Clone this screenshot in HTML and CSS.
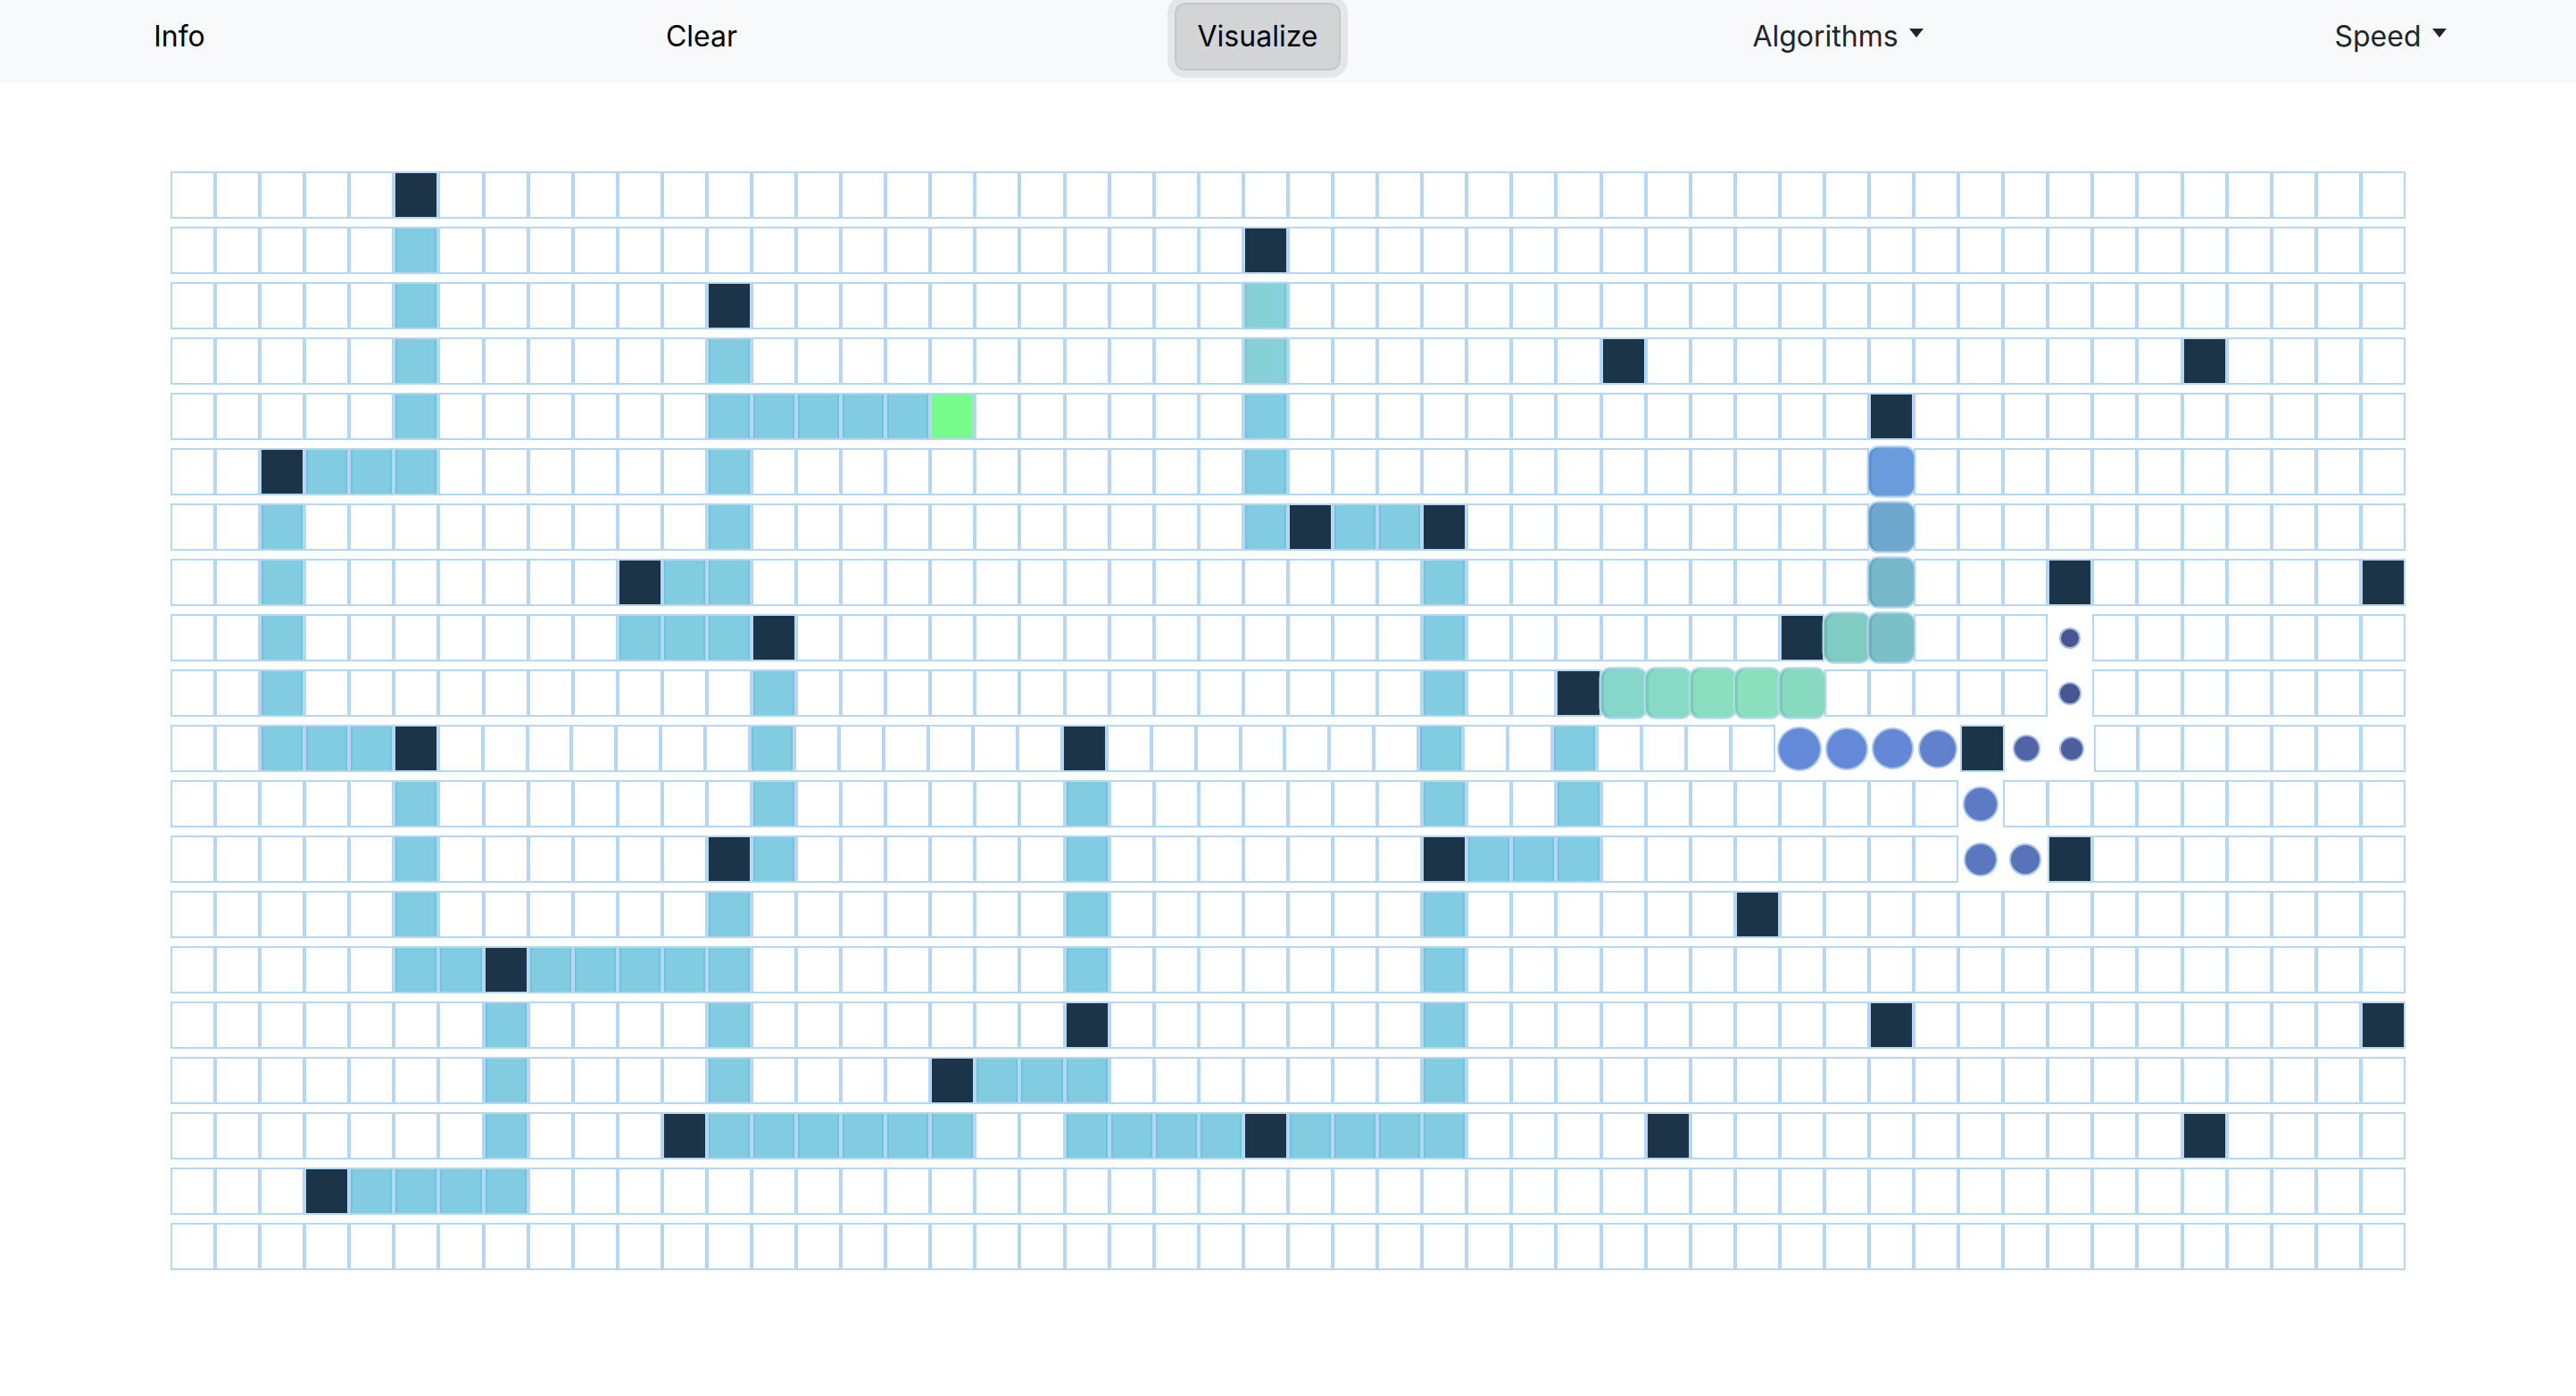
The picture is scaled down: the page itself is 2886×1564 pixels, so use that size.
FILE: index.html
```html
<!DOCTYPE html>
<html lang="en">
<head>
<meta charset="utf-8">
<title>Pathfinding Visualizer</title>
<link rel="stylesheet" href="styles.css">
</head>
<body>
<nav class="navbar">
  <a class="nav-link">Info</a>
  <a class="nav-link">Clear</a>
  <div class="nav-item"><button class="btn-visualize">Visualize</button></div>
  <a class="nav-link dropdown">Algorithms</a>
  <a class="nav-link dropdown">Speed</a>
</nav>
<main class="board" id="board"></main>
<script src="script.js"></script>
</body>
</html>
```

FILE: styles.css
```css
* { box-sizing: border-box; }

body {
  margin: 0;
  background: #ffffff;
  font-family: Inter, "Noto Sans", "Liberation Sans", sans-serif;
}

.navbar {
  display: grid;
  grid-template-columns: 402px 768px 478px 822px 416px;
  justify-items: center;
  align-items: start;
  height: 93px;
  padding-top: 3px;
  background: #f8f9fa;
}

.nav-link {
  padding-top: 14px;
  font-size: 32px;
  line-height: 48px;
  color: #000000;
  cursor: pointer;
}

.nav-link.dropdown { color: #212529; }

.nav-link.dropdown::after {
  content: "";
  display: inline-block;
  margin-left: 12px;
  vertical-align: 10px;
  border-top: 10px solid currentColor;
  border-left: 8px solid transparent;
  border-right: 8px solid transparent;
}

.btn-visualize {
  font: inherit;
  font-size: 32px;
  line-height: 48px;
  padding: 12px 24px;
  border: 2px solid #c6c7c8;
  border-radius: 12px;
  background: #d3d4d5;
  color: #000000;
  box-shadow: 0 0 0 8px rgba(211, 212, 213, 0.5);
}

.board {
  width: 2504px;
  margin: 99px auto 0;
  display: flex;
  flex-direction: column;
  gap: 9px;
}

.row {
  display: flex;
  height: 53px;
}

.cell {
  flex: 1 1 0;
  border: 2px solid #b6d7f3;
  background: #ffffff;
  display: flex;
  align-items: center;
  justify-content: center;
}

.cell.wall { background: #1b3447; }

.cell.visited {
  background: #82cce1;
  box-shadow: inset 2px 0 0 #6fc3de, inset -2px 0 0 #6fc3de;
}

.cell.visited-teal {
  background: #86d1d8;
  border-color: #aed3ef;
  box-shadow: inset 2px 0 0 #73c6d4, inset -2px 0 0 #73c6d4, 0 0 2px #c9e2f6;
}

.cell.start { background: #79fc8e; }

.cell.path {
  position: relative;
  transform: scale(1.1);
  border-radius: 12px;
  border-color: rgba(182, 215, 243, 0.9);
  box-shadow: inset 3px 0 0 rgba(0, 80, 90, 0.12);
}

.cell.orb-cell {
  border-color: transparent;
  background: transparent;
}

.orb {
  display: block;
  border-radius: 50%;
  border: 2px solid rgba(182, 215, 243, 0.8);
}
```

FILE: script.js
```js
const ROWS = 20;
const COLS = 50;

const walls = [
  [0,5],[1,24],[2,12],[3,32],[3,45],[4,38],[5,2],[6,25],[6,28],[7,10],[7,42],[7,49],
  [8,13],[8,36],[9,31],[10,5],[10,20],[10,40],[12,12],[12,28],[12,42],[13,35],[14,7],
  [15,20],[15,38],[15,49],[16,17],[17,11],[17,24],[17,33],[17,45],[18,3]
];

const visited = {
  1: ["5"],
  2: ["5"],
  3: ["5", "12"],
  4: ["5", "12-16", "24"],
  5: ["3-5", "12", "24"],
  6: ["2", "12", "24", "26-27"],
  7: ["2", "11-12", "28"],
  8: ["2", "10-12", "28"],
  9: ["2", "13", "28"],
  10: ["2-4", "13", "28", "31"],
  11: ["5", "13", "20", "28", "31"],
  12: ["5", "13", "20", "29-31"],
  13: ["5", "12", "20", "28"],
  14: ["5-6", "8-12", "20", "28"],
  15: ["7", "12", "28"],
  16: ["7", "12", "18-20", "28"],
  17: ["7", "12-17", "20-23", "25-28"],
  18: ["4-7"]
};

const teal = [[2,24],[3,24]];
const start = [4,17];

const path = [
  [5,38,"#6a9bdc"],[6,38,"#6fa7cf"],[7,38,"#77b7ca"],[8,38,"#7bbfc8"],[8,37,"#80cbc2"],
  [9,36,"#88dabe"],[9,35,"#8ae0bc"],[9,34,"#89dec0"],[9,33,"#87dbc5"],[9,32,"#86d6ca"]
];

const orbs = [
  [10,36,50,"#6589d9"],[10,37,48,"#6489d8"],[10,38,47,"#6387d4"],[10,39,44,"#6181cd"],
  [11,40,40,"#5c7bc4"],[12,40,38,"#5a77bf"],[12,41,36,"#5873b8"],
  [10,41,31,"#5264a5"],[10,42,28,"#4f5f9e"],[9,42,26,"#4a5692"],[8,42,24,"#4a5590"]
];

const types = {};
const key = (r, c) => r + "," + c;

walls.forEach(([r, c]) => { types[key(r, c)] = { cls: "wall" }; });
Object.keys(visited).forEach((r) => {
  visited[r].forEach((spec) => {
    const [a, b] = spec.split("-").map(Number);
    const end = b === undefined ? a : b;
    for (let c = a; c <= end; c++) types[key(r, c)] = { cls: "visited" };
  });
});
teal.forEach(([r, c]) => { types[key(r, c)] = { cls: "visited-teal" }; });
types[key(start[0], start[1])] = { cls: "start" };
path.forEach(([r, c, color]) => { types[key(r, c)] = { cls: "path", color }; });
orbs.forEach(([r, c, size, color]) => { types[key(r, c)] = { cls: "orb-cell", size, color }; });

const board = document.getElementById("board");
for (let r = 0; r < ROWS; r++) {
  const row = document.createElement("div");
  row.className = "row";
  for (let c = 0; c < COLS; c++) {
    const cell = document.createElement("div");
    cell.className = "cell";
    const t = types[key(r, c)];
    if (t) {
      cell.classList.add(t.cls);
      if (t.cls === "path") cell.style.background = t.color;
      if (t.cls === "orb-cell") {
        const orb = document.createElement("span");
        orb.className = "orb";
        orb.style.width = t.size + "px";
        orb.style.height = t.size + "px";
        orb.style.background = t.color;
        cell.appendChild(orb);
      }
    }
    row.appendChild(cell);
  }
  board.appendChild(row);
}
```
